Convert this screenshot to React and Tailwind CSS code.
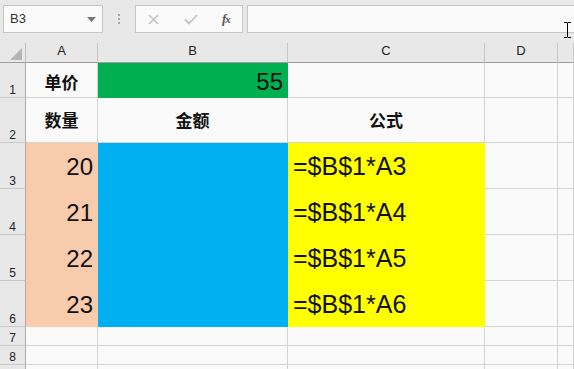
import React from "react";

const cols = ["A", "B", "C", "D", ""];
const rowHeights = ["h-[35px]", "h-[45px]", "h-[46px]", "h-[46px]", "h-[46px]", "h-[46px]", "h-[19px]", "h-[19px]", "h-[19px]"];

const num = "font-['Liberation_Sans',Arial,sans-serif]";
const cjk = "font-['Noto_Sans_CJK_SC',sans-serif] font-bold text-[17px] text-[#111]";

const cellContent = (r, c) => {
  // returns [className, content]
  if (r === 1) {
    if (c === 0) return ["bg-[#fafafa] border-[#d4d4d4] justify-center pt-[3px] " + cjk, "单价"];
    if (c === 1) return ["bg-[#00b050] border-[#00b050] justify-end pr-[4px] pt-[3px] text-[24px] text-[#111] " + num, "55"];
  }
  if (r === 2) {
    if (c === 0) return ["bg-[#fafafa] border-[#d4d4d4] justify-center " + cjk, "数量"];
    if (c === 1) return ["bg-[#fafafa] border-[#d4d4d4] justify-center " + cjk, "金额"];
    if (c === 2) return ["bg-[#fafafa] border-[#d4d4d4] justify-center " + cjk, "公式"];
  }
  if (r >= 3 && r <= 6) {
    if (c === 0) return ["bg-[#f8cbad] border-[#f8cbad] justify-end pr-[4px] pt-[3px] text-[24px] text-[#111] " + num, String(17 + r)];
    if (c === 1) return ["bg-[#00b0f0] border-[#00b0f0]", ""];
    if (c === 2) return ["bg-[#ffff00] border-[#ffff00] justify-start pl-[5px] pt-[3px] text-[25px] text-[#111] " + num, `=$B$1*A${r}`];
  }
  return ["bg-[#fafafa] border-[#d4d4d4]", ""];
};

export default function App() {
  return (
    <div className="w-[574px] h-[369px] overflow-hidden bg-[#e8e8e8] font-['Liberation_Sans',Arial,sans-serif]">
      {/* formula bar */}
      <div className="h-[43px] flex items-start pt-[5px] pl-[3px]">
        <div className="w-[100px] h-[28px] bg-[#fafafa] border border-[#c6c6c6] flex items-center justify-between pl-[6px] pr-[6px]">
          <span className="text-[13px] text-[#333]">B3</span>
          <svg width="9" height="5" viewBox="0 0 9 5"><path d="M0 0h9L4.5 5z" fill="#777" /></svg>
        </div>
        <div className="w-[32px] h-[28px] flex flex-col items-center justify-center gap-[2px]">
          <span className="w-[2px] h-[2px] bg-[#a6a6a6]" />
          <span className="w-[2px] h-[2px] bg-[#a6a6a6]" />
          <span className="w-[2px] h-[2px] bg-[#a6a6a6]" />
        </div>
        <div className="w-[108px] h-[28px] bg-[#fafafa] border border-[#c6c6c6] flex items-center">
          <svg className="ml-[12px]" width="11" height="11" viewBox="0 0 11 11">
            <path d="M1 1l9 9M10 1l-9 9" stroke="#c4c4c4" strokeWidth="1.6" />
          </svg>
          <svg className="ml-[25px]" width="14" height="11" viewBox="0 0 14 11">
            <path d="M1 5.5l4 4 8-8.5" stroke="#c4c4c4" strokeWidth="1.8" fill="none" />
          </svg>
          <span className="ml-[24px] text-[13px] italic text-[#555] font-['Liberation_Serif',serif] font-bold tracking-[-1px]">
            f<span className="text-[11px]">x</span>
          </span>
        </div>
        <div className="ml-[4px] flex-1 h-[28px] bg-[#fafafa] border border-[#c6c6c6] border-r-0 relative">
          <svg className="absolute left-[316px] top-[16px]" width="7" height="16" viewBox="0 0 7 16">
            <path d="M0 0.5h3M4 0.5h3M3.5 0.5v15M0 15.5h3M4 15.5h3" stroke="#000" strokeWidth="1" fill="none" />
          </svg>
        </div>
      </div>

      {/* sheet */}
      <div className="grid grid-cols-[26px_72px_190px_197px_73px_1fr]">
        {/* column headers */}
        <div className="h-[20px] border-r border-b border-r-[#c0c0c0] border-b-[#9e9e9e] relative">
          <svg className="absolute right-[3px] bottom-[2px]" width="12" height="12" viewBox="0 0 12 12">
            <path d="M12 0V12H0z" fill="#b4b4b4" />
          </svg>
        </div>
        {cols.map((c, i) => (
          <div
            key={i}
            className="h-[20px] border-r border-b border-r-[#c8c8c8] border-b-[#9e9e9e] flex items-end justify-center pb-[2px] text-[13px] text-[#222]"
          >
            {c}
          </div>
        ))}

        {rowHeights.map((h, ri) => {
          const r = ri + 1;
          return (
            <React.Fragment key={r}>
              <div className={`${h} border-r border-b border-r-[#ababab] border-b-[#c8c8c8] flex items-end justify-center pb-[1px] text-[12px] text-[#222] leading-none`}>
                {r < 9 ? r : ""}
              </div>
              {cols.map((_, ci) => {
                const [cls, content] = cellContent(r, ci);
                return (
                  <div key={ci} className={`${h} border-r border-b flex items-center ${cls}`}>
                    {content}
                  </div>
                );
              })}
            </React.Fragment>
          );
        })}
      </div>
    </div>
  );
}
